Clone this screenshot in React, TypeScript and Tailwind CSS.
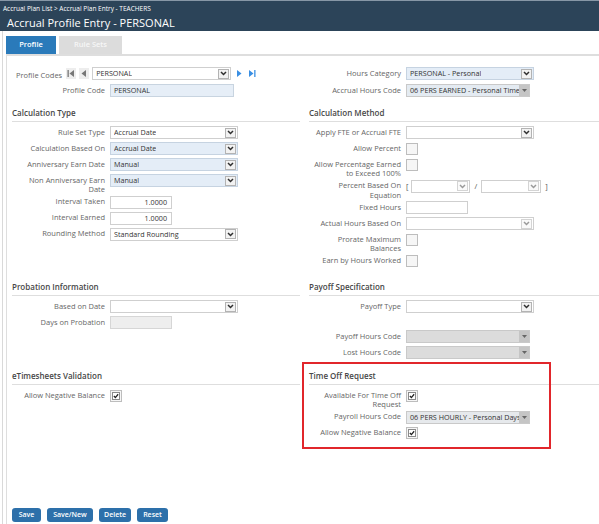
import React from "react";

function Chevron({ faint }: { faint?: boolean }) {
  return (
    <span
      className={
        faint
          ? "flex h-[10px] w-[11px] shrink-0 items-center justify-center border border-[#d4d4d4] bg-[#fafafa]"
          : "flex h-[10px] w-[11px] shrink-0 items-center justify-center border border-[#b3b3b3] bg-[#f2f2f2]"
      }
    >
      <svg width="7" height="5" viewBox="0 0 7 5">
        <path d="M1 1l2.5 2.5L6 1" stroke={faint ? "#9a9a9a" : "#2f2f2f"} strokeWidth="1.5" fill="none" />
      </svg>
    </span>
  );
}

function Select({ cls, value = "", tone = "white" }: { cls: string; value?: string; tone?: "white" | "blue" | "faint" }) {
  const box =
    tone === "blue"
      ? "flex h-[13px] items-center justify-between border border-[#c6d3e1] bg-[#e4edf7] pl-[3px] pr-[1px]"
      : "flex h-[13px] items-center justify-between border border-[#cfcfcf] bg-white pl-[3px] pr-[1px]";
  return (
    <div className={`${box} ${cls}`}>
      <span className="overflow-hidden whitespace-nowrap text-[7.2px] leading-[11px] text-[#333]">{value}</span>
      <Chevron faint={tone === "faint"} />
    </div>
  );
}

function DropSelect({ cls, value = "", bg }: { cls: string; value?: string; bg: string }) {
  return (
    <div className={`flex h-[13px] items-stretch border border-[#c9c9c9] ${bg} ${cls}`}>
      <span className="flex-1 overflow-hidden whitespace-nowrap pl-[3px] text-[7.2px] leading-[11px] text-[#333]">{value}</span>
      <span className="flex w-[10px] shrink-0 items-center justify-center bg-[#c5c5c5]">
        <svg width="5" height="3" viewBox="0 0 5 3">
          <path d="M0 0h5L2.5 3z" fill="#666" />
        </svg>
      </span>
    </div>
  );
}

function Input({ cls, value = "", gray }: { cls: string; value?: string; gray?: boolean }) {
  return (
    <div
      className={`${
        gray ? "border-[#d6d6d6] bg-[#eeeeee]" : "border-[#cfcfcf] bg-white"
      } h-[13px] border pr-[4px] text-right text-[7.2px] leading-[11px] text-[#333] ${cls}`}
    >
      {value}
    </div>
  );
}

function Check({ checked }: { checked?: boolean }) {
  return (
    <span className="flex h-[12px] w-[12px] items-center justify-center border border-[#bdbdbd] bg-[#f6f6f6]">
      {checked && (
        <span className="flex h-[8px] w-[8px] items-center justify-center border border-[#8a8a8a] bg-white">
          <svg width="7" height="6" viewBox="0 0 7 6">
            <path d="M1 3l1.8 1.8L6 1" stroke="#222" strokeWidth="1.5" fill="none" />
          </svg>
        </span>
      )}
    </span>
  );
}

function Row({ label, lw, children }: { label: React.ReactNode; lw: string; children: React.ReactNode }) {
  return (
    <div className="flex items-start gap-[5px]">
      <div className={`${lw} -mb-[2px] shrink-0 pt-[1.5px] text-right text-[7.5px] leading-[9.5px] text-[#666]`}>{label}</div>
      <div className="flex min-h-[13px] items-center">{children}</div>
    </div>
  );
}

function Heading({ children }: { children: React.ReactNode }) {
  return (
    <div className="border-b border-[#dedede] pb-[3px] text-[8px] font-semibold leading-[10px] text-[#474747]">{children}</div>
  );
}

function NavBtn({ kind }: { kind: "first" | "prev" | "next" | "last" }) {
  const blue = kind === "next" || kind === "last";
  const c = blue ? "#3a8fe3" : "#777";
  return (
    <span className={blue ? "flex h-[11px] w-[10px] items-center justify-center" : "flex h-[11px] w-[10px] items-center justify-center bg-[#ededed]"}>
      <svg width="8" height="7" viewBox="0 0 8 7">
        {kind === "first" && (
          <>
            <rect x="0.5" y="0" width="1.3" height="7" fill={c} />
            <path d="M7 0v7L2.5 3.5z" fill={c} />
          </>
        )}
        {kind === "prev" && <path d="M6 0v7L1.5 3.5z" fill={c} />}
        {kind === "next" && <path d="M2 0v7l4.5-3.5z" fill={c} />}
        {kind === "last" && (
          <>
            <path d="M1 0v7l4.5-3.5z" fill={c} />
            <rect x="6.2" y="0" width="1.3" height="7" fill={c} />
          </>
        )}
      </svg>
    </span>
  );
}

const L = "w-[93px]";
const R = "w-[92px]";

export default function App() {
  return (
    <div className="relative flex h-[524px] w-[599px] flex-col overflow-hidden bg-white font-['Open_Sans',sans-serif]">
      {/* header */}
      <div className="h-[31px] shrink-0 border-t border-[#8797a6] bg-[#2c4459] text-white">
        <div className="pl-[3px] pt-[4px] text-[6.5px] leading-[8px]">Accrual Plan List &gt; Accrual Plan Entry - TEACHERS</div>
        <div className="mt-[3px] pl-[7px] text-[11px] leading-[13px]">Accrual Profile Entry - PERSONAL</div>
      </div>

      <div className="ml-[2px] flex flex-1 flex-col border-l border-[#d9d9d9]">
        {/* tabs */}
        <div className="flex gap-[3px] pl-[3px] pt-[5px]">
          <div className="flex h-[18px] w-[50px] items-center justify-center bg-[#2a7aba] text-[7.5px] font-semibold text-white">Profile</div>
          <div className="flex h-[18px] w-[63px] items-center justify-center bg-[#dcdcdc] text-[7.5px] font-semibold text-[#f7f7f7]">Rule Sets</div>
        </div>

        <div className="ml-[3px] flex flex-1 flex-col border-l border-t-2 border-[#dedede]">
          {/* profile block */}
          <div className="grid h-[49px] grid-cols-[295px_1fr] pt-[11px]">
            <div className="flex flex-col gap-[4px] pl-[5px]">
              <div className="flex h-[13px] items-center gap-[3px] pl-[4px]">
                <span className="mr-[1px] pt-[4px] text-[7.5px] leading-[9px] text-[#666]">Profile Codes</span>
                <NavBtn kind="first" />
                <NavBtn kind="prev" />
                <Select cls="w-[139px]" value="PERSONAL" />
                <NavBtn kind="next" />
                <NavBtn kind="last" />
              </div>
              <Row label="Profile Code" lw={L}>
                <div className="h-[13px] w-[124px] border border-[#c8d4e0] bg-[#e6eef7] pl-[3px] text-[7.2px] leading-[11px] text-[#333]">PERSONAL</div>
              </Row>
            </div>
            <div className="flex flex-col gap-[4px] pl-[7px]">
              <Row label="Hours Category" lw={R}>
                <Select cls="w-[128px]" value="PERSONAL - Personal" tone="blue" />
              </Row>
              <Row label="Accrual Hours Code" lw={R}>
                <DropSelect cls="w-[124px]" value="06 PERS EARNED - Personal Time" bg="bg-[#e4ebf2]" />
              </Row>
            </div>
          </div>

          {/* calculation */}
          <div className="grid h-[174px] grid-cols-[295px_1fr] pt-[3px]">
            <div className="pl-[5px] pr-[2px]">
              <Heading>Calculation Type</Heading>
              <div className="flex flex-col gap-[3px] pt-[4px]">
                <Row label="Rule Set Type" lw={L}>
                  <Select cls="w-[128px]" value="Accrual Date" />
                </Row>
                <Row label="Calculation Based On" lw={L}>
                  <Select cls="w-[128px]" value="Accrual Date" tone="blue" />
                </Row>
                <Row label="Anniversary Earn Date" lw={L}>
                  <Select cls="w-[128px]" value="Manual" tone="blue" />
                </Row>
                <Row label={<>Non Anniversary Earn<br />Date</>} lw={L}>
                  <Select cls="w-[128px]" value="Manual" tone="blue" />
                </Row>
                <Row label="Interval Taken" lw={L}>
                  <Input cls="w-[62px]" value="1.0000" />
                </Row>
                <Row label="Interval Earned" lw={L}>
                  <Input cls="w-[62px]" value="1.0000" />
                </Row>
                <Row label="Rounding Method" lw={L}>
                  <Select cls="w-[128px]" value="Standard Rounding" />
                </Row>
              </div>
            </div>
            <div className="pl-[7px]">
              <Heading>Calculation Method</Heading>
              <div className="flex flex-col gap-[3px] pt-[4px]">
                <Row label="Apply FTE or Accrual FTE" lw={R}>
                  <Select cls="w-[128px]" />
                </Row>
                <Row label="Allow Percent" lw={R}>
                  <Check />
                </Row>
                <Row label={<>Allow Percentage Earned<br />to Exceed 100%</>} lw={R}>
                  <Check />
                </Row>
                <Row label={<>Percent Based On<br />Equation</>} lw={R}>
                  <div className="flex items-center gap-[2px] text-[7.5px] leading-[11px] text-[#555]">
                    <span className="mr-[1px]">[</span>
                    <Select cls="w-[59px]" tone="faint" />
                    <span className="mx-[2px]">/</span>
                    <Select cls="w-[60px]" tone="faint" />
                    <span className="ml-[2px]">]</span>
                  </div>
                </Row>
                <Row label="Fixed Hours" lw={R}>
                  <Input cls="w-[62px]" />
                </Row>
                <Row label="Actual Hours Based On" lw={R}>
                  <Select cls="w-[128px]" tone="faint" />
                </Row>
                <Row label={<>Prorate Maximum<br />Balances</>} lw={R}>
                  <Check />
                </Row>
                <Row label="Earn by Hours Worked" lw={R}>
                  <Check />
                </Row>
              </div>
            </div>
          </div>

          {/* probation / payoff */}
          <div className="grid h-[89px] grid-cols-[295px_1fr] pt-[3px]">
            <div className="pl-[5px] pr-[2px]">
              <Heading>Probation Information</Heading>
              <div className="flex flex-col gap-[3px] pt-[4px]">
                <Row label="Based on Date" lw={L}>
                  <Select cls="w-[128px]" />
                </Row>
                <Row label="Days on Probation" lw={L}>
                  <Input cls="w-[62px]" gray />
                </Row>
              </div>
            </div>
            <div className="pl-[7px]">
              <Heading>Payoff Specification</Heading>
              <div className="flex flex-col gap-[3px] pt-[4px]">
                <Row label="Payoff Type" lw={R}>
                  <Select cls="w-[128px]" />
                </Row>
                <div className="h-[11px]" />
                <Row label="Payoff Hours Code" lw={R}>
                  <DropSelect cls="w-[124px]" bg="bg-[#dcdcdc]" />
                </Row>
                <Row label="Lost Hours Code" lw={R}>
                  <DropSelect cls="w-[124px]" bg="bg-[#dcdcdc]" />
                </Row>
              </div>
            </div>
          </div>

          {/* validation / time off */}
          <div className="grid grid-cols-[295px_1fr] pt-[3px]">
            <div className="pl-[5px] pr-[2px]">
              <Heading>eTimesheets Validation</Heading>
              <div className="flex flex-col gap-[3px] pt-[4px]">
                <Row label="Allow Negative Balance" lw={L}>
                  <Check checked />
                </Row>
              </div>
            </div>
            <div className="pl-[7px]">
              <Heading>Time Off Request</Heading>
              <div className="flex flex-col gap-[3px] pt-[4px]">
                <Row label={<>Available For Time Off<br />Request</>} lw={R}>
                  <Check checked />
                </Row>
                <Row label="Payroll Hours Code" lw={R}>
                  <DropSelect cls="w-[124px]" value="06 PERS HOURLY - Personal Days" bg="bg-[#e6e9ec]" />
                </Row>
                <Row label="Allow Negative Balance" lw={R}>
                  <Check checked />
                </Row>
              </div>
            </div>
          </div>

          {/* buttons */}
          <div className="mt-auto flex gap-[6px] pb-[2px] pl-[5px]">
            {[
              ["Save", "w-[29px]"],
              ["Save/New", "w-[46px]"],
              ["Delete", "w-[32px]"],
              ["Reset", "w-[31px]"],
            ].map(([t, w]) => (
              <div
                key={t}
                className={`${w} flex h-[14px] items-center justify-center rounded-[3px] bg-[#2d70aa] text-[7px] font-semibold text-white`}
              >
                {t}
              </div>
            ))}
          </div>
        </div>
      </div>

      {/* annotation box */}
      <div className="absolute left-[302px] top-[362px] h-[87px] w-[249px] border-2 border-[#e1262b]" />
    </div>
  );
}
